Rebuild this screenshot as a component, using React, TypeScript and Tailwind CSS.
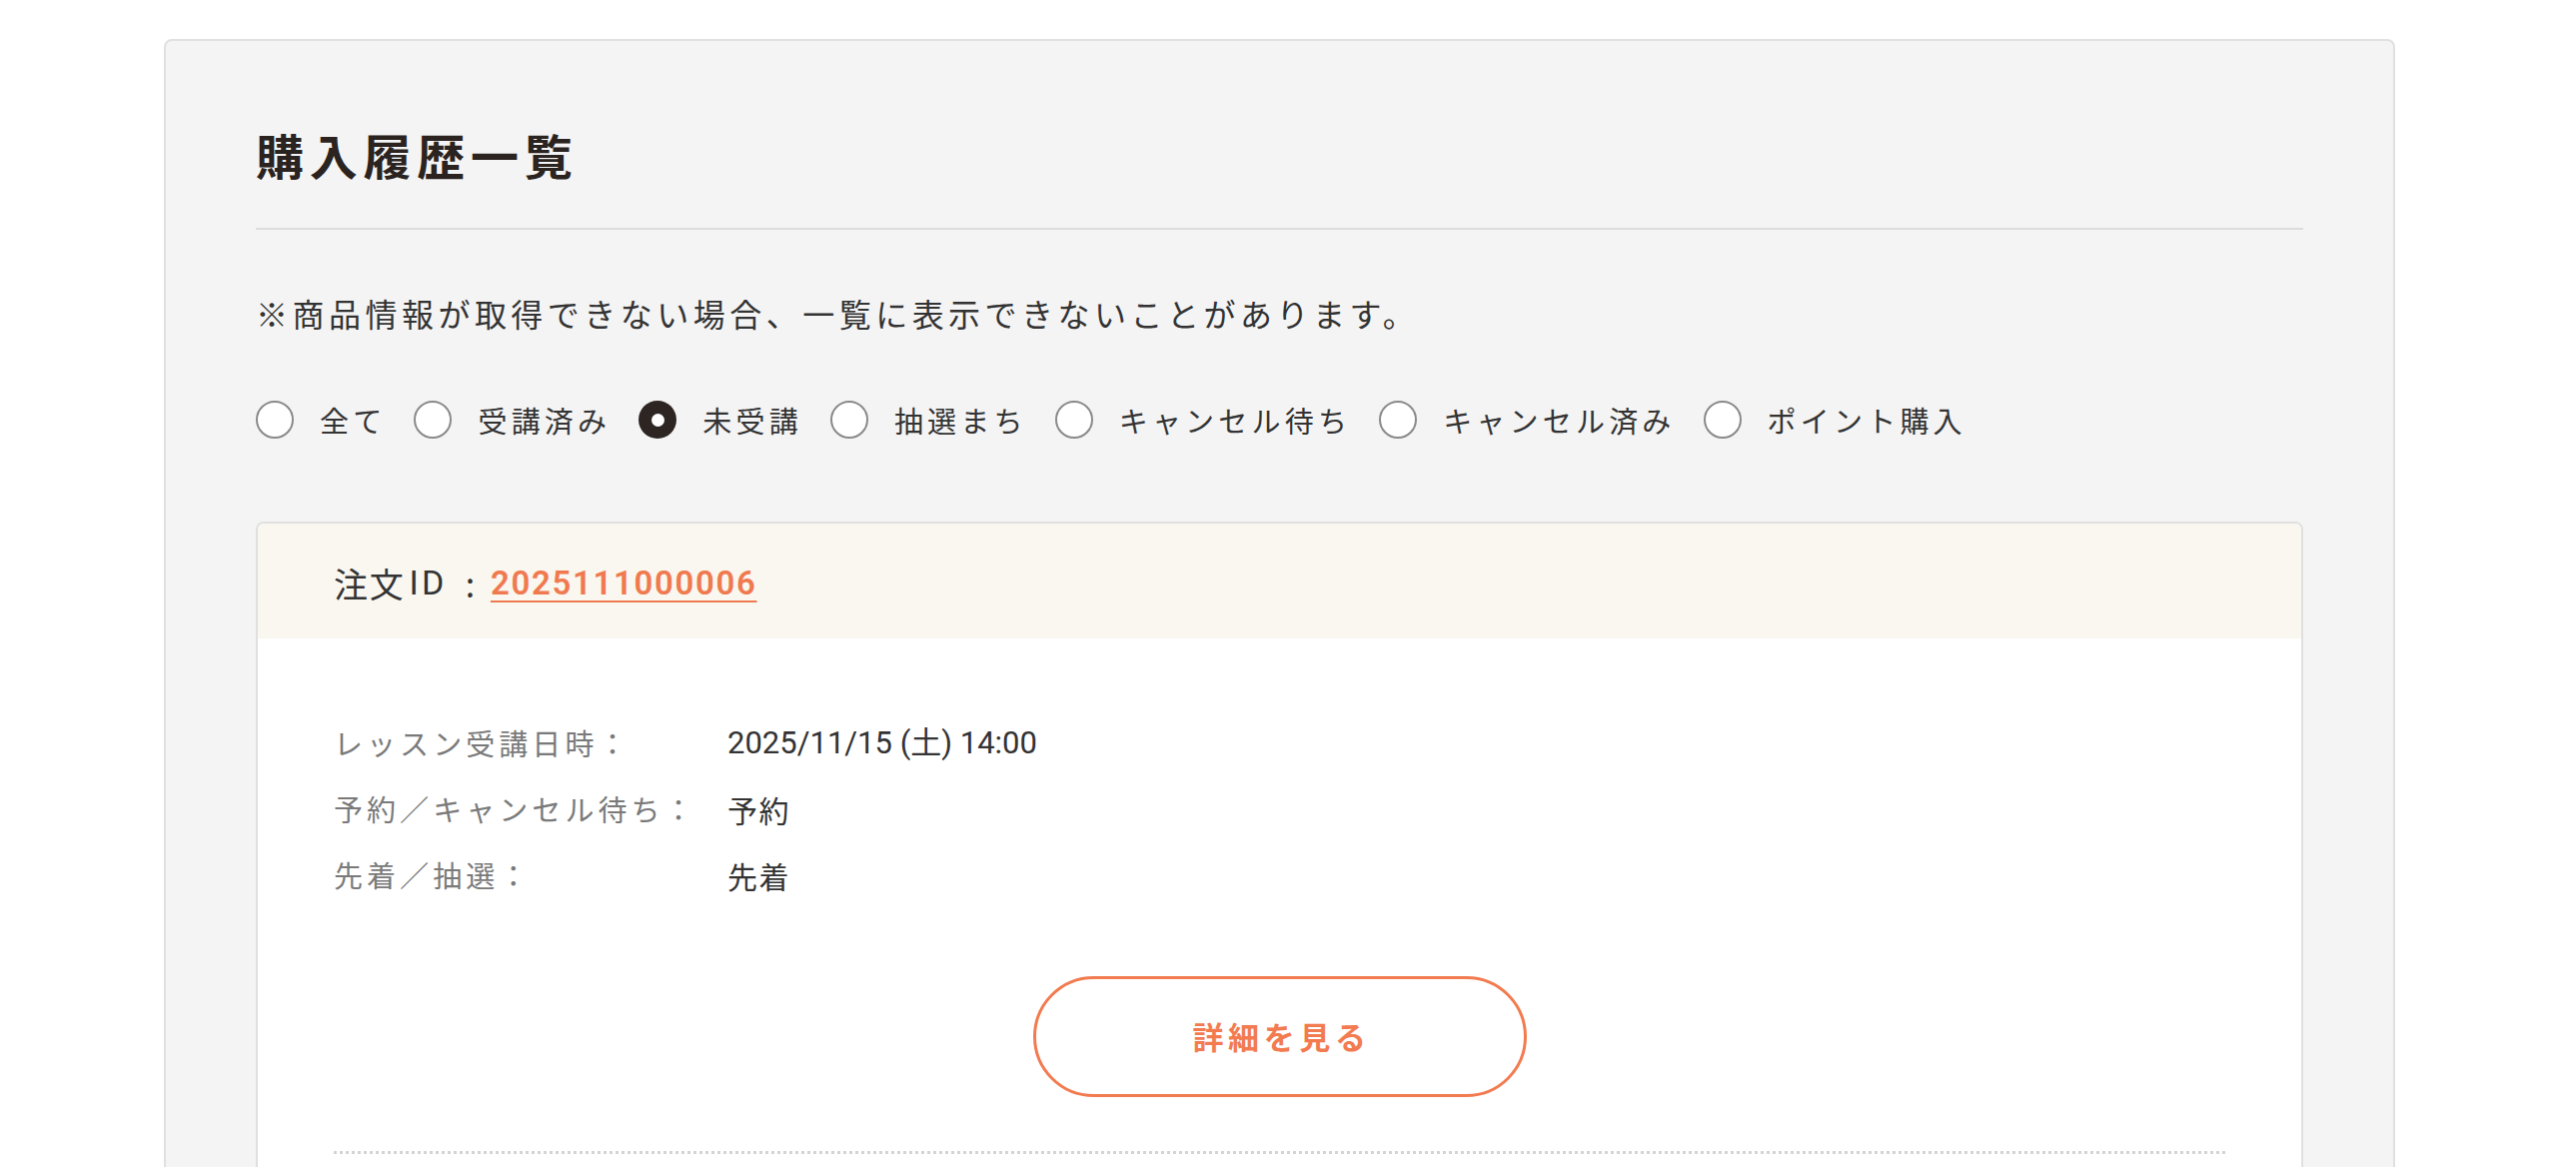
import { useState } from "react";

const filters = [
  "全て",
  "受講済み",
  "未受講",
  "抽選まち",
  "キャンセル待ち",
  "キャンセル済み",
  "ポイント購入",
];

const rows = [
  { label: "レッスン受講日時：", value: "2025/11/15 (土) 14:00", num: true },
  { label: "予約／キャンセル待ち：", value: "予約" },
  { label: "先着／抽選：", value: "先着" },
];

function Radio({ checked }: { checked: boolean }) {
  if (checked) {
    return (
      <span className="flex h-[38px] w-[38px] shrink-0 items-center justify-center rounded-full bg-[#2d2522]">
        <span className="h-[13px] w-[13px] rounded-full bg-white" />
      </span>
    );
  }
  return <span className="h-[38px] w-[38px] shrink-0 rounded-full border-2 border-[#8a8a8a] bg-white" />;
}

export default function App() {
  const [selected, setSelected] = useState("未受講");

  return (
    <div className="min-h-[1400px] bg-white pt-[39px] font-['Noto_Sans_CJK_JP','Noto_Sans',sans-serif] text-[#333]">
      {/* 購入履歴パネル */}
      <div className="ml-[164px] w-[2233px] rounded-[8px] border-2 border-[#e0e0e0] bg-[#f4f4f4] px-[90px] pt-[81px] pb-[200px]">
        <h1 className="border-b-2 border-[#dcdcdc] pb-[42px] text-[48px] leading-[64px] font-bold tracking-[0.12em] text-[#2b2320]">
          購入履歴一覧
        </h1>

        <p className="mt-[59px] text-[32px] leading-[48px] tracking-[0.14em] text-[#333]">
          ※商品情報が取得できない場合、一覧に表示できないことがあります。
        </p>

        {/* 絞り込み */}
        <div className="mt-[59px] flex h-[48px] items-center gap-[28px]">
          {filters.map((f) => (
            <label
              key={f}
              className="flex cursor-pointer items-center gap-[26px]"
              onClick={() => setSelected(f)}
            >
              <Radio checked={selected === f} />
              <span className="text-[29px] leading-[48px] tracking-[0.145em] text-[#333]">{f}</span>
            </label>
          ))}
        </div>

        {/* 注文カード */}
        <div className="mt-[78px] overflow-hidden rounded-t-[8px] border-2 border-[#e0e0e0] bg-white">
          <div className="flex h-[115px] items-center bg-[#faf7f0] pt-[4px] pl-[76px] text-[34px] tracking-[0.05em]">
            <span className="text-[#333]">注文</span>
            <span className="ml-[4px] font-['Roboto',sans-serif] tracking-[0.1em] text-[#333]">ID</span>
            <span className="mr-[14px] ml-[18px] text-[#333]">:</span>
            <a
              href="#"
              className="font-['Roboto',sans-serif] text-[33px] font-semibold tracking-[0.05em] text-[#f07a4f] underline decoration-2 underline-offset-[6px]"
            >
              2025111000006
            </a>
          </div>

          <div className="px-[76px] pt-[72px] pb-[120px]">
            <div className="flex flex-col">
              {rows.map((r) => (
                <div key={r.label} className="flex h-[66px] items-center">
                  <span className="w-[394px] shrink-0 text-[29px] tracking-[0.14em] text-[#7a7a7a]">{r.label}</span>
                  <span
                    className={
                      r.num
                        ? "font-['Roboto','Noto_Sans_CJK_JP',sans-serif] text-[31px] tracking-[0em] text-[#333]"
                        : "text-[30px] tracking-[0.05em] text-[#333]"
                    }
                  >
                    {r.value}
                  </span>
                </div>
              ))}
            </div>

            <div className="mt-[68px] flex justify-center">
              <button className="flex h-[121px] w-[494px] items-center justify-center rounded-full border-[3px] border-[#f27b50] bg-white pl-[4px] text-[31px] font-bold tracking-[0.15em] text-[#f27b50]">
                詳細を見る
              </button>
            </div>

            <div className="mt-[54px] border-t-[3px] border-dotted border-[#d4d4d4]" />
          </div>
        </div>
      </div>
    </div>
  );
}
